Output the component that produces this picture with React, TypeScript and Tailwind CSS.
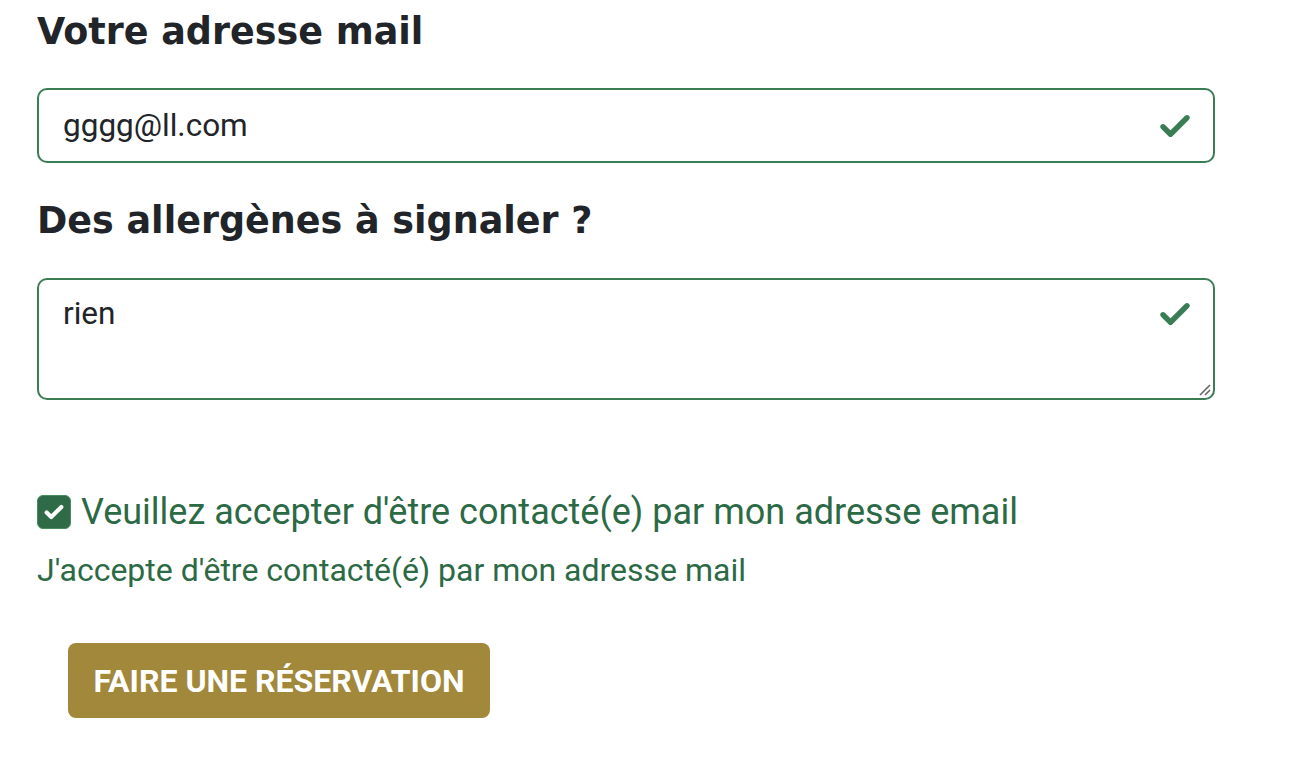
import React from "react";

const Check = ({ className = "", sw = 3.6 }: { className?: string; sw?: number }) => (
  <svg viewBox="0 0 24 24" className={className} fill="none" stroke="currentColor" strokeWidth={sw} strokeLinecap="round" strokeLinejoin="round">
    <path d="M4 12.5l5 5L20 6.5" />
  </svg>
);

export default function App() {
  return (
    <div className="min-h-[780px] w-[1302px] bg-white" style={{ fontFamily: "Roboto, 'Liberation Sans', sans-serif" }}>
      <div className="w-[1178px] ml-[37px] pt-[10px]">
        <h2 className="text-[36.5px] leading-[44px] font-bold text-[#212529]" style={{ fontFamily: "'DejaVu Sans', sans-serif" }}>
          Votre adresse mail
        </h2>
        <div className="mt-[34px] h-[75px] rounded-[10px] border-2 border-[#3a7d55] flex items-center px-[24px]">
          <span className="flex-1 text-[31.5px] text-[#212529]">gggg@ll.com</span>
          <Check className="w-[36px] h-[36px] text-[#3a7d55] mr-[-4px]" />
        </div>
        <h2 className="mt-[36px] text-[36.5px] leading-[44px] font-bold text-[#212529]" style={{ fontFamily: "'DejaVu Sans', sans-serif" }}>
          Des allergènes à signaler ?
        </h2>
        <div className="relative mt-[35px] h-[122px] rounded-[10px] border-2 border-[#3a7d55] px-[24px] pt-[14px] flex">
          <span className="flex-1 text-[31.5px] leading-[40px] text-[#212529]">rien</span>
          <Check className="w-[36px] h-[36px] text-[#3a7d55] mr-[-4px] mt-[2px]" />
          <svg className="absolute right-[2px] bottom-[2px] w-[14px] h-[14px]" viewBox="0 0 14 14" stroke="#666" strokeWidth={1.6}>
            <path d="M3 13L13 3M8 13L13 8" />
          </svg>
        </div>
        <div className="mt-[92px] flex items-center gap-[10px]">
          <div className="w-[34px] h-[34px] rounded-[6px] bg-[#2f6b47] border border-[#4a8a62] flex items-center justify-center">
            <Check className="w-[22px] h-[22px] text-white" sw={4.5} />
          </div>
          <span className="text-[36px] leading-[40px] text-[#2b6a45]">Veuillez accepter d'être contacté(e) par mon adresse email</span>
        </div>
        <p className="mt-[18px] text-[32px] leading-[40px] text-[#2b6a45]">J'accepte d'être contacté(é) par mon adresse mail</p>
        <button className="mt-[53px] ml-[31px] h-[75px] w-[422px] rounded-[8px] bg-[#a1883b] text-white font-bold text-[32px] uppercase">
          Faire une réservation
        </button>
      </div>
    </div>
  );
}
